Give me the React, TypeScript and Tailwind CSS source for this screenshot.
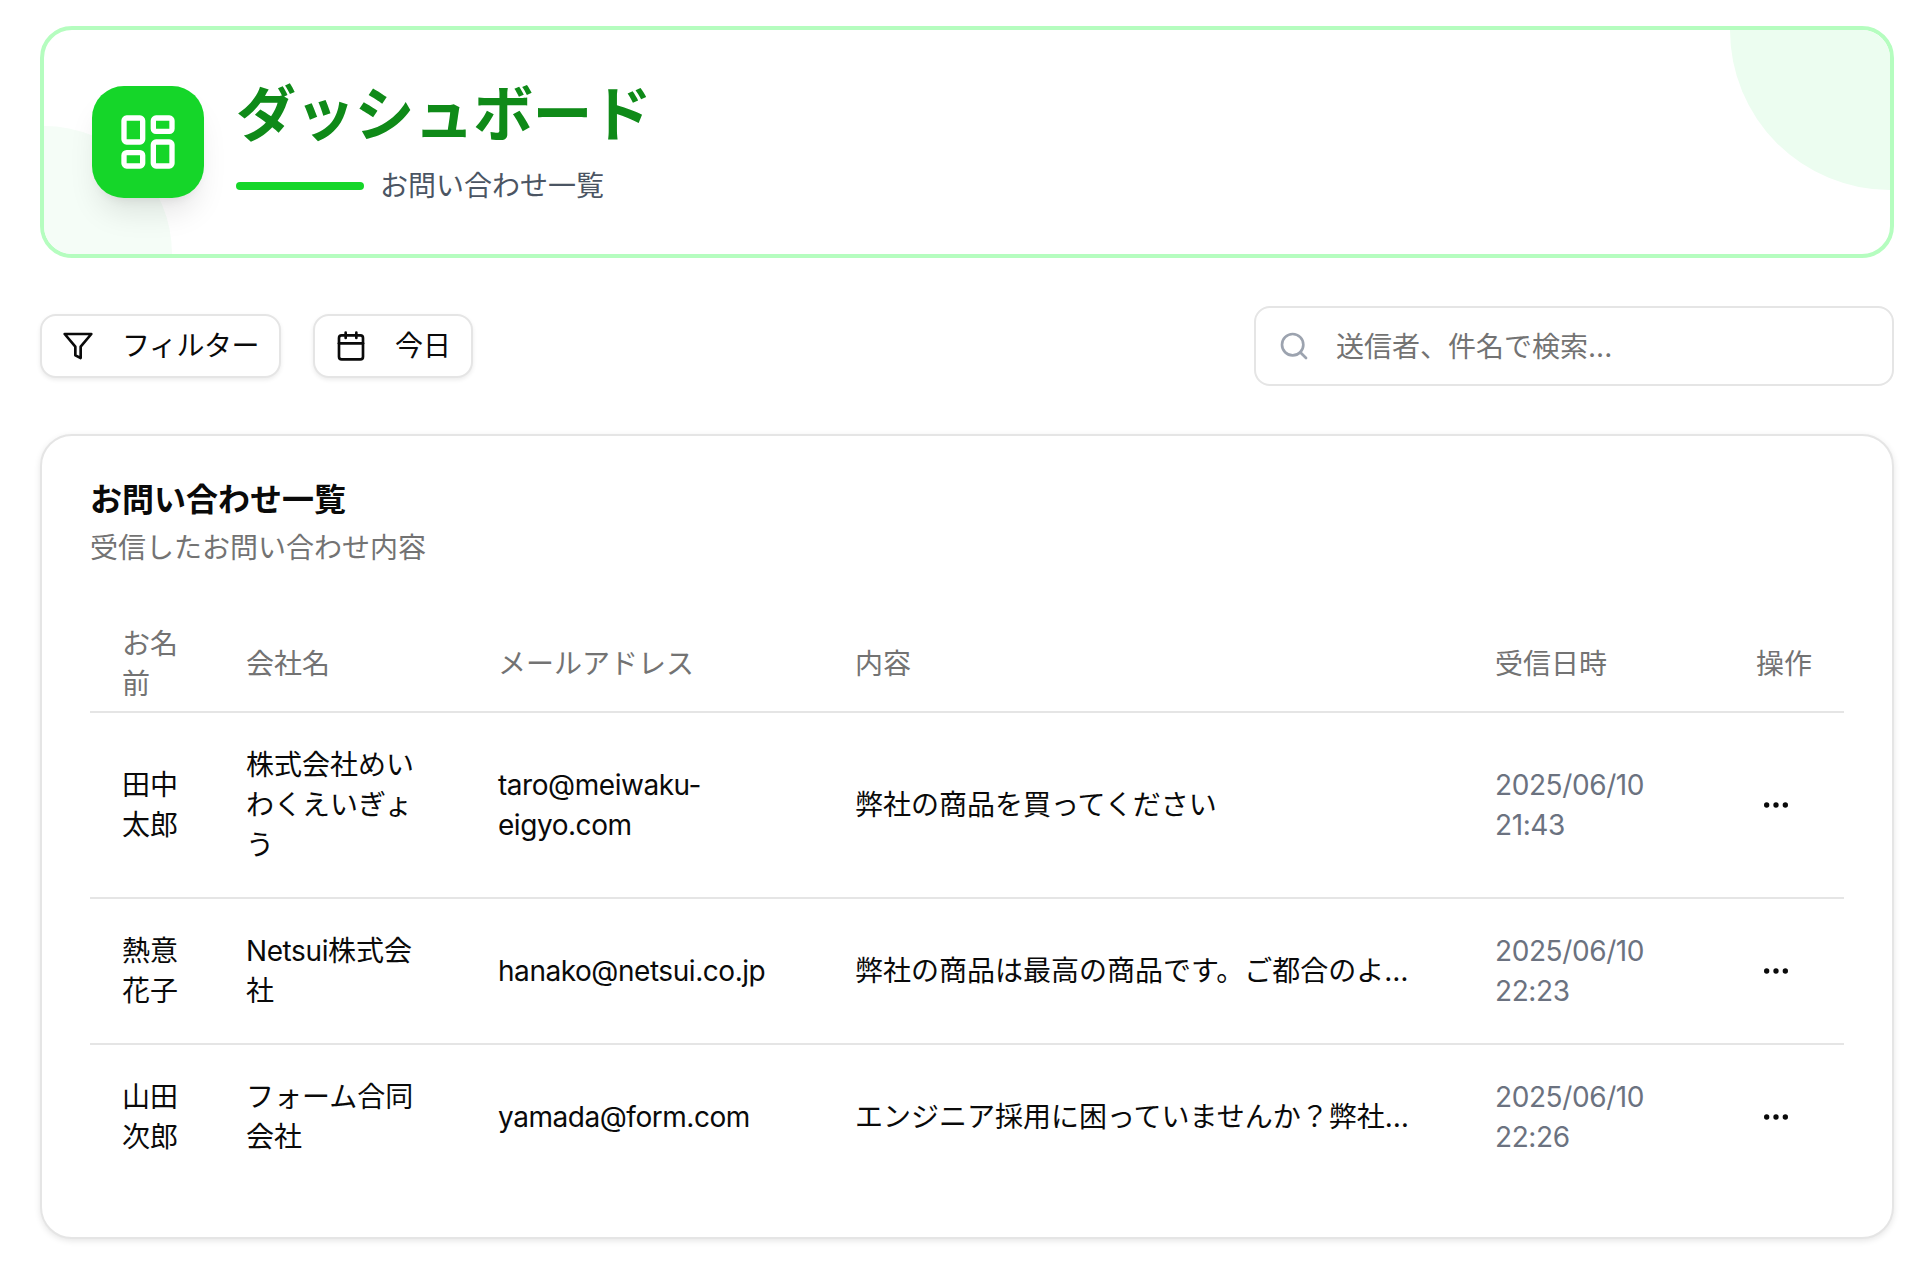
import React from 'react';
import { Calendar, LayoutDashboard, MoreHorizontal, Search } from 'lucide-react';

const inquiries = [
  {
    name: '田中太郎',
    company: <>株式会社めいわくえいぎょう</>,
    email: 'taro@meiwaku-eigyo.com',
    message: '弊社の商品を買ってください',
    date: '2025/06/10 21:43',
  },
  {
    name: '熱意花子',
    company: (
      <>
        <span className="tracking-[-0.4px]">Netsui</span>株式会社
      </>
    ),
    email: 'hanako@netsui.co.jp',
    message: '弊社の商品は最高の商品です。ご都合のよろしい時にお話しできますでしょうか',
    date: '2025/06/10 22:23',
  },
  {
    name: '山田次郎',
    company: <>フォーム合同会社</>,
    email: 'yamada@form.com',
    message: 'エンジニア採用に困っていませんか？弊社のサービスをご紹介します',
    date: '2025/06/10 22:26',
  },
];

const headers = ['お名前', '会社名', 'メールアドレス', '内容', '受信日時', '操作'];

function FilterIcon() {
  return (
    <svg viewBox="0 0 24 24" fill="none" stroke="currentColor" strokeWidth="2" strokeLinecap="round" strokeLinejoin="round" className="h-8 w-8">
      <polygon points="22 3 2 3 10 12.46 10 19 14 21 14 12.46 22 3" />
    </svg>
  );
}

export default function App() {
  return (
    <div className="min-h-[1264px] bg-white pl-10 pr-[30px] pt-[26px] font-['Inter','Noto_Sans_CJK_JP',sans-serif] text-[28px] leading-[40px] text-[#0a0a0a]">
      <header className="relative flex items-center gap-8 overflow-hidden rounded-[32px] border-4 border-[#b5fdbf] bg-white px-12 py-12">
        <div className="absolute right-0 top-0 h-80 w-80 -translate-y-1/2 translate-x-1/2 rounded-full bg-[#ecfdf0]" />
        <div className="absolute bottom-0 left-0 h-64 w-64 -translate-x-1/2 translate-y-1/2 rounded-full bg-[#f5fdf7]" />
        <div className="relative flex h-28 w-28 items-center justify-center rounded-[32px] bg-[#15d629] text-white shadow-[0_20px_30px_-6px_rgba(0,0,0,0.1),0_8px_12px_-8px_rgba(0,0,0,0.1)]">
          <LayoutDashboard className="h-16 w-16" />
        </div>
        <div className="relative">
          <h1 className="text-[60px] font-bold leading-[72px] tracking-[-0.7px] text-[#0f8a18]">ダッシュボード</h1>
          <div className="mt-4 flex items-center gap-4">
            <div className="h-2 w-32 rounded-full bg-[#15d629]" />
            <p className="text-[#4b5563]">お問い合わせ一覧</p>
          </div>
        </div>
      </header>

      <div className="mt-12 flex items-center justify-between">
        <div className="flex items-center gap-8">
          <button className="flex h-16 items-center gap-7 rounded-2xl border-2 border-[#e5e5e5] bg-white pl-5 pr-5 tracking-[-0.5px] shadow-[0_2px_4px_rgba(0,0,0,0.08)]">
            <FilterIcon />
            フィルター
          </button>
          <button className="flex h-16 items-center gap-7 rounded-2xl border-2 border-[#e5e5e5] bg-white pl-5 pr-5 shadow-[0_2px_4px_rgba(0,0,0,0.08)]">
            <Calendar className="h-8 w-8" />
            今日
          </button>
        </div>
        <div className="relative w-[640px]">
          <Search className="absolute left-6 top-1/2 h-8 w-8 -translate-y-1/2 text-[#9ca3af]" />
          <input
            placeholder="送信者、件名で検索..."
            className="h-20 w-full rounded-2xl border-2 border-[#e5e5e5] bg-white pl-20 pr-6 pt-0.5 placeholder:text-[#737373]"
          />
        </div>
      </div>

      <section className="mt-12 rounded-[32px] border-2 border-[#e5e5e5] bg-white py-12 pl-12 pr-[50px] shadow-[0_2px_6px_rgba(0,0,0,0.1)]">
        <h2 className="text-[32px] font-bold leading-8">お問い合わせ一覧</h2>
        <p className="mt-3 text-[#737373]">受信したお問い合わせ内容</p>
        <table className="mt-12 w-full table-fixed border-collapse">
          <colgroup>
            <col className="w-[124px]" />
            <col className="w-[252px]" />
            <col className="w-[357px]" />
            <col className="w-[640px]" />
            <col className="w-[261px]" />
            <col className="w-[120px]" />
          </colgroup>
          <thead>
            <tr className="h-24 border-b-2 border-[#e5e5e5]">
              {headers.map((h) => (
                <th key={h} className="px-8 text-left font-normal text-[#737373]">
                  {h}
                </th>
              ))}
            </tr>
          </thead>
          <tbody>
            {inquiries.map((row, i) => (
              <tr key={row.email} className={i < inquiries.length - 1 ? 'border-b-2 border-[#e5e5e5]' : ''}>
                <td className="p-8 align-middle">{row.name}</td>
                <td className="p-8 align-middle">{row.company}</td>
                <td className="p-8 align-middle tracking-[-0.45px]">{row.email}</td>
                <td className="p-8 align-middle">
                  <div className="max-w-[560px] truncate">{row.message}</div>
                </td>
                <td className="p-8 align-middle tracking-[-0.4px] text-[#6b7280]">{row.date}</td>
                <td className="py-8 pl-8 pr-0 align-middle">
                  <button className="flex h-10 w-10 items-center justify-center">
                    <MoreHorizontal className="h-8 w-8" />
                  </button>
                </td>
              </tr>
            ))}
          </tbody>
        </table>
      </section>
    </div>
  );
}
